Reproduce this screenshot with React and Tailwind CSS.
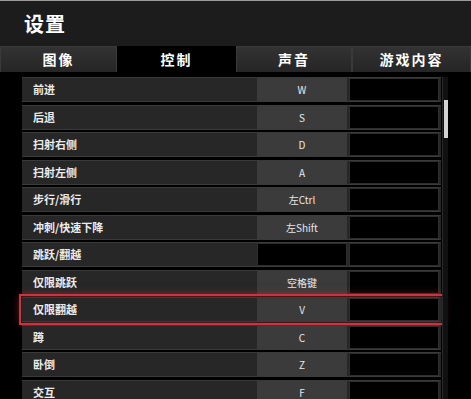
import React from 'react';

const bindings = [
  { label: '前进', key: 'W' },
  { label: '后退', key: 'S' },
  { label: '扫射右侧', key: 'D' },
  { label: '扫射左侧', key: 'A' },
  { label: '步行/滑行', key: '左Ctrl' },
  { label: '冲刺/快速下降', key: '左Shift' },
  { label: '跳跃/翻越', key: '' },
  { label: '仅限跳跃', key: '空格键' },
  { label: '仅限翻越', key: 'V', selected: true },
  { label: '蹲', key: 'C' },
  { label: '卧倒', key: 'Z' },
  { label: '交互', key: 'F' },
];

const tabs = [
  { name: '图像', w: 'w-[117px]' },
  { name: '控制', w: 'w-[119px]', active: true },
  { name: '声音', w: 'w-[116px]' },
  { name: '游戏内容', w: 'w-[119px]' },
];

const BindingRow = ({ label, keyName, selected }) => (
  <div
    className={
      'flex h-[25px] shrink-0 items-stretch border-y border-[#3a3a3a] bg-[#272727] ' +
      (selected ? 'outline-2 outline-offset-1 outline-[#c8343f] shadow-[0_0_8px_2px_rgba(200,50,60,0.6)]' : '')
    }
  >
    <div className="flex flex-1 items-center pl-[11px] text-[11px] font-bold text-[#ececec]">{label}</div>
    <div
      className={
        'flex w-[90px] items-center justify-center text-[10px] text-[#e8e8e8] ' +
        (keyName ? 'bg-[#3b3b3b]' : 'border border-[#2e2e2e] bg-black')
      }
    >
      {keyName}
    </div>
    <div className="ml-[2px] mr-[2px] w-[90px] border border-[#2e2e2e] bg-black" />
  </div>
);

export default function App() {
  return (
    <div
      className="flex h-[399px] w-[471px] flex-col overflow-hidden bg-black"
      style={{ fontFamily: '"Noto Sans CJK SC", "Noto Sans", sans-serif' }}
    >
      {/* title */}
      <div className="flex h-[46px] shrink-0 items-center border-t border-[#9a9a9a] bg-[#1c1c1c] pl-[24px]">
        <h1 className="text-[20px] font-bold tracking-[1px] text-white">设置</h1>
      </div>

      {/* tabs */}
      <div className="flex h-[26px] shrink-0">
        {tabs.map(t => (
          <div
            key={t.name}
            className={
              t.w +
              ' flex items-center justify-center text-[14px] font-bold tracking-[2px] text-white ' +
              (t.active
                ? 'bg-black'
                : 'border-x border-t border-[#3a3a3a] bg-gradient-to-b from-[#323232] to-[#262626]')
            }
          >
            {t.name}
          </div>
        ))}
      </div>

      {/* bindings list */}
      <div className="flex flex-1 pl-[22px] pt-[5px]">
        <div className="flex w-[419px] flex-col gap-[2.5px]">
          {bindings.map(b => (
            <BindingRow key={b.label} label={b.label} keyName={b.key} selected={b.selected} />
          ))}
        </div>
        <div className="ml-[1px] flex w-[6px] flex-col items-center border-l border-[#2a2a2a] bg-[#111]">
          <div className="mt-[23px] h-[38px] w-[4px] bg-[#d4d4d4]" />
        </div>
      </div>
    </div>
  );
}
